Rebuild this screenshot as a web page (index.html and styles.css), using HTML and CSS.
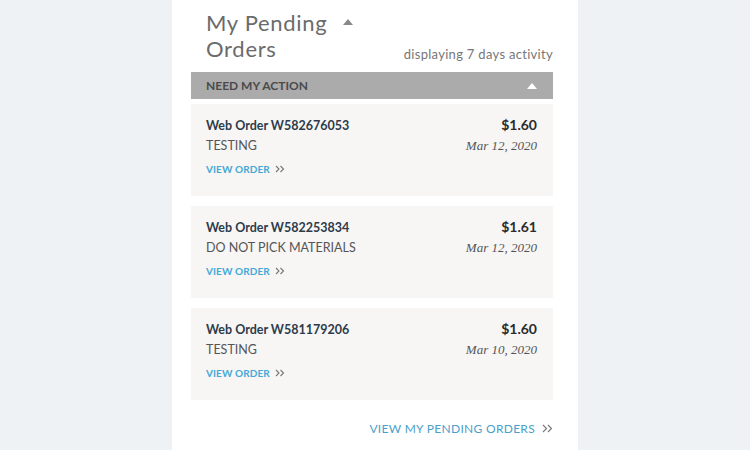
FILE: index.html
```html
<!DOCTYPE html>
<html>
<head>
<meta charset="utf-8">
<link rel="stylesheet" href="styles.css">
</head>
<body>
<div class="panel">
  <div class="header">
    <div class="title">
      <div class="title-line">My Pending <span class="caret-up gray"></span></div>
      <div class="title-line">Orders</div>
    </div>
    <div class="activity">displaying 7 days activity</div>
  </div>
  <div class="section-bar">
    <span>NEED MY ACTION</span>
    <span class="caret-up white"></span>
  </div>
  <div class="cards">
    <div class="card">
      <div class="row">
        <span class="order">Web Order W582676053</span>
        <span class="price">$1.60</span>
      </div>
      <div class="row">
        <span class="note">TESTING</span>
        <span class="date">Mar 12, 2020</span>
      </div>
      <a class="view">VIEW ORDER <svg class="chev" width="10" height="8" viewBox="0 0 10 8"><path d="M1 1l3 3-3 3M5.5 1l3 3-3 3" fill="none" stroke="#777" stroke-width="1.1"/></svg></a>
    </div>
    <div class="card">
      <div class="row">
        <span class="order">Web Order W582253834</span>
        <span class="price">$1.61</span>
      </div>
      <div class="row">
        <span class="note">DO NOT PICK MATERIALS</span>
        <span class="date">Mar 12, 2020</span>
      </div>
      <a class="view">VIEW ORDER <svg class="chev" width="10" height="8" viewBox="0 0 10 8"><path d="M1 1l3 3-3 3M5.5 1l3 3-3 3" fill="none" stroke="#777" stroke-width="1.1"/></svg></a>
    </div>
    <div class="card">
      <div class="row">
        <span class="order">Web Order W581179206</span>
        <span class="price">$1.60</span>
      </div>
      <div class="row">
        <span class="note">TESTING</span>
        <span class="date">Mar 10, 2020</span>
      </div>
      <a class="view">VIEW ORDER <svg class="chev" width="10" height="8" viewBox="0 0 10 8"><path d="M1 1l3 3-3 3M5.5 1l3 3-3 3" fill="none" stroke="#777" stroke-width="1.1"/></svg></a>
    </div>
  </div>
  <div class="footer">
    <a class="view-all">VIEW MY PENDING ORDERS <svg class="chev" width="11" height="9" viewBox="0 0 11 9"><path d="M1 1l3.5 3.5-3.5 3.5M6 1l3.5 3.5-3.5 3.5" fill="none" stroke="#777" stroke-width="1.1"/></svg></a>
  </div>
</div>
</body>
</html>
```
FILE: styles.css
```css
html, body {
  margin: 0;
  padding: 0;
}
body {
  background: #eef2f5;
  font-family: "Lato", "Open Sans", sans-serif;
  height: 450px;
  overflow: hidden;
}
.panel {
  margin-left: 172px;
  width: 362px;
  height: 450px;
  background: #fff;
  padding: 0 25px 0 19px;
}
.header {
  display: flex;
  justify-content: space-between;
  align-items: flex-end;
  height: 72px;
  padding-left: 15px;
  box-sizing: border-box;
  padding-bottom: 10px;
}
.title {
  font-size: 22px;
  line-height: 26px;
  color: #6b6b6b;
  font-weight: 400;
  letter-spacing: 0.7px;
  padding-top: 2px;
}
.title-line {
  display: flex;
  align-items: center;
}
.caret-up {
  display: inline-block;
  width: 0;
  height: 0;
  border-left: 5px solid transparent;
  border-right: 5px solid transparent;
  border-bottom: 6px solid #888;
}
.title .caret-up {
  margin-left: 16px;
  margin-top: -2px;
}
.caret-up.white {
  border-bottom-color: #fff;
}
.activity {
  font-size: 13px;
  color: #777;
  letter-spacing: 0.3px;
  padding-bottom: 0;
}
.section-bar {
  height: 27px;
  background: #ababab;
  display: flex;
  align-items: center;
  justify-content: space-between;
  padding: 0 16px 0 15px;
  font-size: 12px;
  font-weight: 700;
  color: #4a4a4a;
}
.cards {
  display: flex;
  flex-direction: column;
  gap: 10px;
  padding-top: 5px;
}
.card {
  background: #f7f6f5;
  height: 92px;
  box-sizing: border-box;
  padding: 12px 16px 0 15px;
}
.row {
  display: flex;
  justify-content: space-between;
  align-items: baseline;
}
.row + .row {
  margin-top: 5px;
}
.order {
  font-size: 12.5px;
  font-weight: 700;
  color: #2d3b4b;
}
.price {
  font-size: 14px;
  font-weight: 700;
  color: #2b2b2b;
}
.note {
  font-size: 12.5px;
  color: #555;
}
.date {
  font-family: "Liberation Serif", "DejaVu Serif", serif;
  font-style: italic;
  font-size: 13px;
  color: #555;
}
.view {
  display: inline-flex;
  align-items: center;
  margin-top: 9px;
  font-size: 10px;
  font-weight: 700;
  color: #45a8d6;
  letter-spacing: 0.1px;
}
.chev {
  margin-left: 5px;
}
.footer {
  display: flex;
  justify-content: flex-end;
  padding-top: 21px;
}
.view-all {
  display: inline-flex;
  align-items: center;
  font-size: 12px;
  color: #4a9fcb;
  letter-spacing: 0.3px;
}
.view-all .chev {
  margin-left: 7px;
}
```
